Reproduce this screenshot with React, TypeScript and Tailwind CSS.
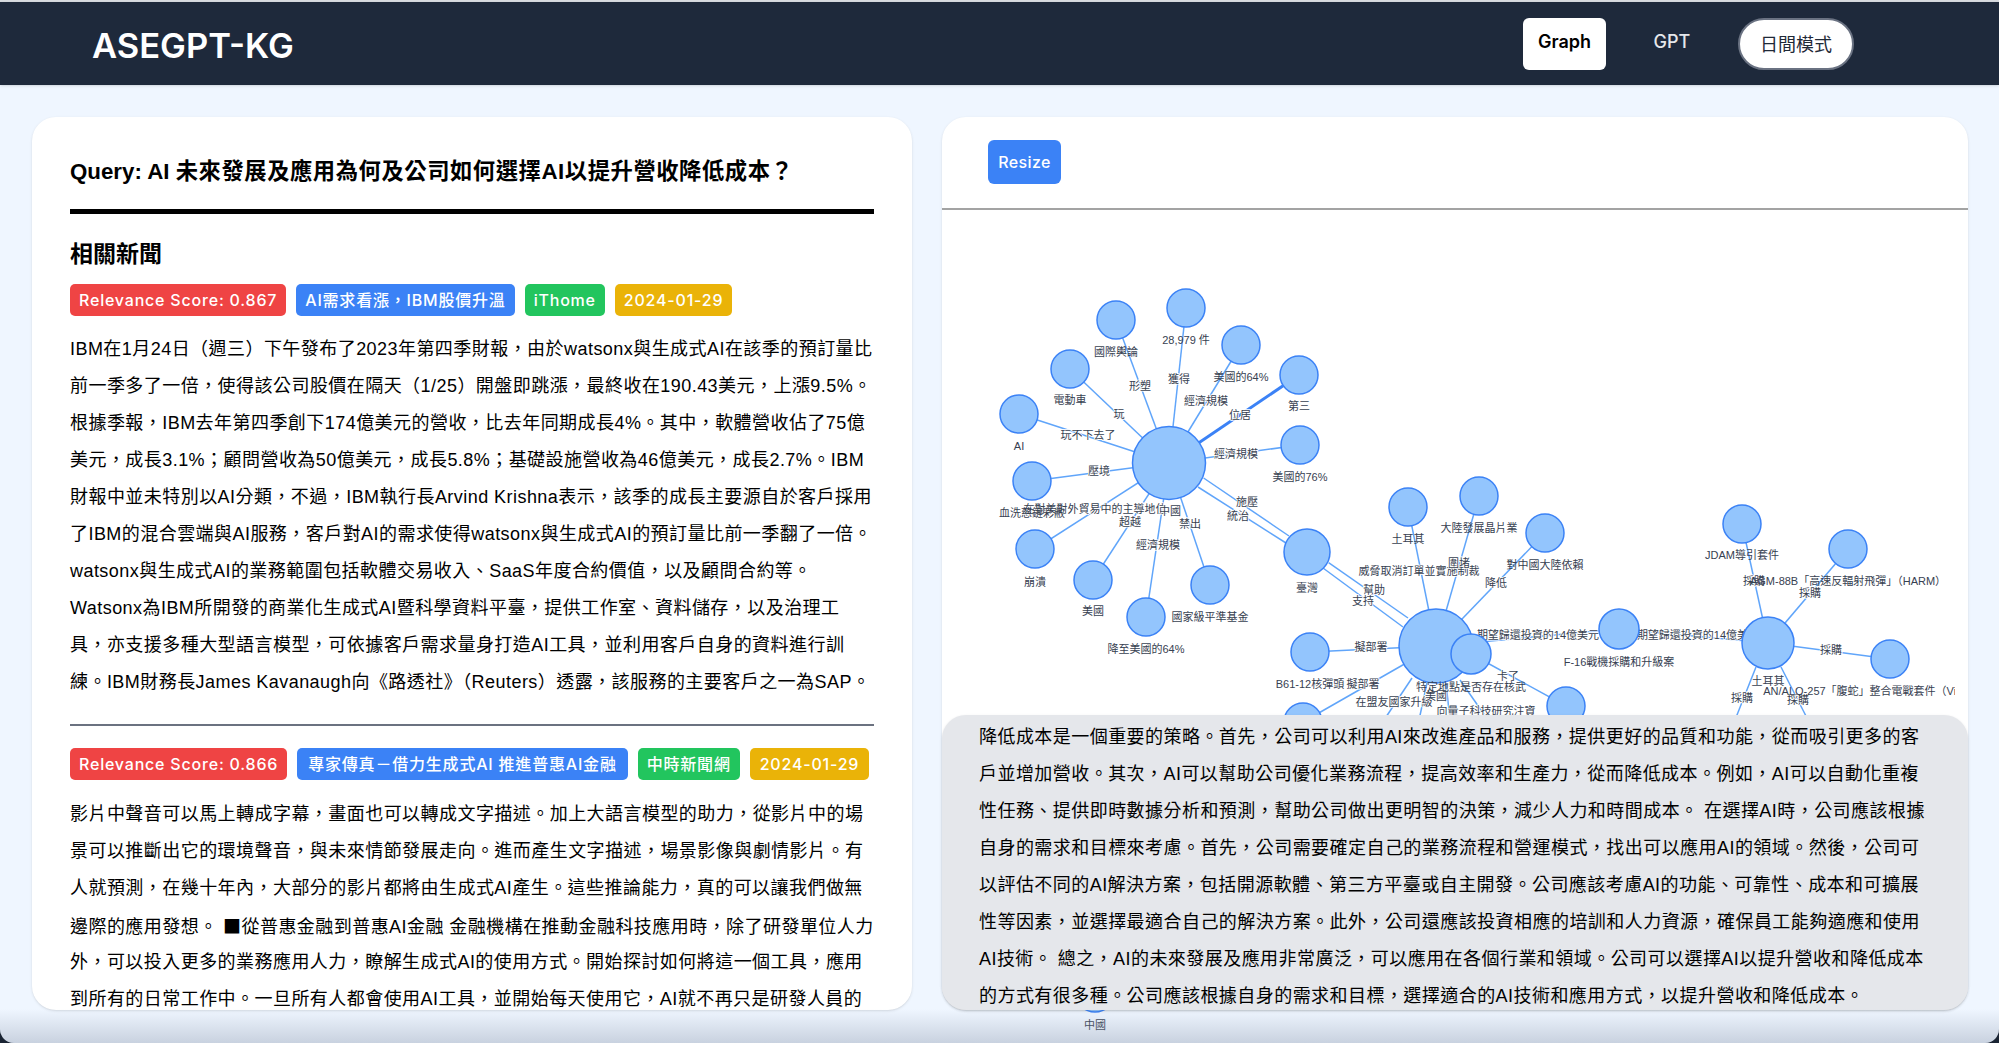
import React from "react";

const news1 = [
  "IBM在1月24日（週三）下午發布了2023年第四季財報，由於watsonx與生成式AI在該季的預訂量比",
  "前一季多了一倍，使得該公司股價在隔天（1/25）開盤即跳漲，最終收在190.43美元，上漲9.5%。",
  "根據季報，IBM去年第四季創下174億美元的營收，比去年同期成長4%。其中，軟體營收佔了75億",
  "美元，成長3.1%；顧問營收為50億美元，成長5.8%；基礎設施營收為46億美元，成長2.7%。IBM",
  "財報中並未特別以AI分類，不過，IBM執行長Arvind Krishna表示，該季的成長主要源自於客戶採用",
  "了IBM的混合雲端與AI服務，客戶對AI的需求使得watsonx與生成式AI的預訂量比前一季翻了一倍。",
  "watsonx與生成式AI的業務範圍包括軟體交易收入、SaaS年度合約價值，以及顧問合約等。",
  "Watsonx為IBM所開發的商業化生成式AI暨科學資料平臺，提供工作室、資料儲存，以及治理工",
  "具，亦支援多種大型語言模型，可依據客戶需求量身打造AI工具，並利用客戶自身的資料進行訓",
  "練。IBM財務長James Kavanaugh向《路透社》（Reuters）透露，該服務的主要客戶之一為SAP。",
];
const news2 = [
  "影片中聲音可以馬上轉成字幕，畫面也可以轉成文字描述。加上大語言模型的助力，從影片中的場",
  "景可以推斷出它的環境聲音，與未來情節發展走向。進而產生文字描述，場景影像與劇情影片。有",
  "人就預測，在幾十年內，大部分的影片都將由生成式AI產生。這些推論能力，真的可以讓我們做無",
  "邊際的應用發想。 ■從普惠金融到普惠AI金融 金融機構在推動金融科技應用時，除了研發單位人力",
  "外，可以投入更多的業務應用人力，瞭解生成式AI的使用方式。開始探討如何將這一個工具，應用",
  "到所有的日常工作中。一旦所有人都會使用AI工具，並開始每天使用它，AI就不再只是研發人員的",
];
const gpt = [
  "降低成本是一個重要的策略。首先，公司可以利用AI來改進產品和服務，提供更好的品質和功能，從而吸引更多的客",
  "戶並增加營收。其次，AI可以幫助公司優化業務流程，提高效率和生產力，從而降低成本。例如，AI可以自動化重複",
  "性任務、提供即時數據分析和預測，幫助公司做出更明智的決策，減少人力和時間成本。 在選擇AI時，公司應該根據",
  "自身的需求和目標來考慮。首先，公司需要確定自己的業務流程和營運模式，找出可以應用AI的領域。然後，公司可",
  "以評估不同的AI解決方案，包括開源軟體、第三方平臺或自主開發。公司應該考慮AI的功能、可靠性、成本和可擴展",
  "性等因素，並選擇最適合自己的解決方案。此外，公司還應該投資相應的培訓和人力資源，確保員工能夠適應和使用",
  "AI技術。 總之，AI的未來發展及應用非常廣泛，可以應用在各個行業和領域。公司可以選擇AI以提升營收和降低成本",
  "的方式有很多種。公司應該根據自身的需求和目標，選擇適合的AI技術和應用方式，以提升營收和降低成本。",
];

type N = [number, number, number, string?, number?];
const nodes: N[] = [
  [1169, 463, 36.5],
  [1186, 308, 19, "28,979 件", 340],
  [1116, 320, 19, "國際輿論", 352],
  [1241, 345, 19, "美國的64%", 377],
  [1070, 369, 19, "電動車", 400],
  [1299, 375, 19, "第三", 406],
  [1019, 414, 19, "AI", 446],
  [1300, 445, 19, "美國的76%", 477],
  [1032, 481, 19, "血洗慈鏈彩敝", 513],
  [1035, 549, 19, "崩潰", 582],
  [1093, 580, 19, "美國", 611],
  [1146, 617, 19, "降至美國的64%", 649],
  [1210, 585, 19, "國家級平準基金", 617],
  [1307, 552, 23, "臺灣", 588],
  [1436, 646, 37],
  [1471, 654, 20, "特定地點是否存在核武", 687],
  [1310, 652, 19, "B61-12核彈頭", 684],
  [1303, 722, 19],
  [1408, 507, 19, "土耳其", 539],
  [1479, 496, 19, "大陸發展晶片業", 528],
  [1545, 533, 19, "對中國大陸依賴", 565],
  [1619, 629, 20, "F-16戰機採購和升級案", 662],
  [1768, 643, 26, "土耳其", 681],
  [1742, 524, 19, "JDAM導引套件", 555],
  [1848, 549, 19, "AGM-88B「高速反輻射飛彈」（HARM）", 581],
  [1890, 659, 19, "AN/ALQ-257「腹蛇」整合電戰套件（Viper Shield）", 691],
  [1566, 706, 19],
  [1095, 993, 19, "中國", 1025],
];

type E = [number, number, number, number, number?, string?];
const H1: [number, number] = [1169, 463];
const H2: [number, number] = [1436, 646];
const H3: [number, number] = [1768, 643];
const edges: E[] = [
  [...H1, 1186, 308], [...H1, 1116, 320], [...H1, 1241, 345], [...H1, 1070, 369],
  [...H1, 1299, 375, 3, "#3b82f6"], [...H1, 1019, 414], [...H1, 1300, 445], [...H1, 1032, 481],
  [...H1, 1035, 549], [...H1, 1093, 580], [...H1, 1146, 617], [...H1, 1210, 585],
  [1203.6, 478, 1289, 536], [1198, 487, 1286, 543],
  [1328.6, 562.7, 1408, 618], [1323, 568, 1403, 627],
  [...H2, 1408, 507], [...H2, 1479, 496], [...H2, 1545, 533], [...H2, 1310, 652], [...H2, 1303, 722],
  [...H2, 1619, 629], [...H3, 1619, 629],
  [1412, 678, 1384, 720], [1427, 683, 1419, 720], [1446, 683, 1450, 720], [1460, 680, 1488, 720],
  [1471, 654, 1566, 706],
  [...H3, 1742, 524], [...H3, 1848, 549], [...H3, 1890, 659],
  [1756, 667, 1735, 720], [1781, 667, 1808, 720],
];

const edgeLabels: [number, number, string][] = [
  [1140, 386, "形塑"], [1179, 379, "獲得"], [1206, 401, "經濟規模"], [1240, 415, "位居"],
  [1119, 414, "玩"], [1088, 435, "玩不下去了"], [1236, 454, "經濟規模"], [1099, 471, "壓境"],
  [1095, 509, "在對美對外貿易中的主導地位"], [1170, 511, "中國"], [1130, 522, "超越"], [1190, 524, "禁出"],
  [1158, 545, "經濟規模"], [1247, 502, "施壓"], [1238, 516, "統治"],
  [1419, 571, "威脅取消訂單並實施制裁"], [1459, 563, "圍堵"], [1374, 590, "幫助"], [1363, 601, "支持"],
  [1496, 583, "降低"], [1371, 647, "擬部署"], [1363, 684, "擬部署"], [1394, 702, "在盟友國家升級"],
  [1508, 676, "卡了"], [1436, 696, "美國"], [1486, 711, "向量子科技研究注資"],
  [1538, 635, "期望歸還投資的14億美元"], [1698, 635, "期望歸還投資的14億美元"],
  [1754, 581, "採購"], [1810, 593, "採購"], [1831, 650, "採購"], [1742, 698, "採購"], [1798, 700, "採購"],
];

function Graph() {
  return (
    <svg
      className="absolute left-0 top-[93px] w-[1013px] h-[833px]"
      viewBox="942 210 1013 833"
      aria-label="knowledge graph"
    >
      {edges.map((e, i) => (
        <line key={i} x1={e[0]} y1={e[1]} x2={e[2]} y2={e[3]} stroke={e[5] ?? "#60a5fa"} strokeWidth={e[4] ?? 1.5} />
      ))}
      {edgeLabels.map(([x, y, t], i) => (
        <text
          key={i}
          x={x}
          y={y}
          textAnchor="middle"
          dominantBaseline="central"
          fontSize={11}
          fill="#374151"
          stroke="#ffffff"
          strokeWidth={1.5}
          paintOrder="stroke"
        >
          {t}
        </text>
      ))}
      {nodes.map((n, i) => (
        <circle key={i} cx={n[0]} cy={n[1]} r={n[2]} fill="#93c5fd" stroke="#3b82f6" strokeWidth={1.5} />
      ))}
      {nodes.map((n, i) =>
        n[3] ? (
          <text key={i} x={n[0]} y={n[4]} textAnchor="middle" dominantBaseline="central" fontSize={11} fill="#374151">
            {n[3]}
          </text>
        ) : null
      )}
    </svg>
  );
}

function Badge({ c, children }: { c: string; children: React.ReactNode }) {
  return (
    <span
      className={`h-8 rounded-[5px] flex items-center text-white text-base font-medium tracking-[0.8px] whitespace-nowrap font-['Inter','Noto_Sans_CJK_TC',sans-serif] ${c}`}
    >
      {children}
    </span>
  );
}

function Lines({ lines }: { lines: string[] }) {
  return (
    <div className="text-lg leading-[37px] tracking-wide text-black whitespace-nowrap">
      {lines.map((l, i) => {
        const parts = l.split("■");
        return (
          <div key={i} className="h-[37px]">
            {parts.length === 2 ? (
              <>
                {parts[0]}
                <span className="font-['Noto_Sans_CJK_TC',sans-serif]">■</span>
                {parts[1]}
              </>
            ) : (
              l
            )}
          </div>
        );
      })}
    </div>
  );
}

export default function App() {
  return (
    <div className="h-[1043px] w-full bg-[#1a2433] overflow-hidden font-['Liberation_Sans','Noto_Sans_CJK_TC',sans-serif]">
      <div className="relative h-full bg-[#eff6ff] rounded-b-[14px] overflow-hidden flex flex-col">
        <div className="h-[2px] bg-[#d8dbe0]" />
        <header className="h-[83px] bg-[#1e293b] flex items-center pl-[92px] pr-[145px] shadow-sm font-['Inter','Noto_Sans_CJK_TC',sans-serif]">
          <h1 className="text-[34.5px] font-semibold text-white tracking-normal pt-[5px]">ASEGPT-KG</h1>
          <div className="ml-auto flex items-center">
            <button className="w-[83px] h-[52px] bg-white rounded-md text-black font-semibold text-lg pb-[4px]">Graph</button>
            <button className="w-[132px] h-[52px] text-gray-200 font-medium text-lg pb-[4px]">GPT</button>
            <button className="w-[116px] h-[52px] bg-white rounded-full border-2 border-gray-500 text-lg text-[#1f2937] pt-[3px]">
              日間模式
            </button>
          </div>
        </header>

        <main className="flex gap-[30px] pl-[32px] pr-[31px] pt-[32px]">
          <section className="w-[880px] h-[893px] bg-white rounded-3xl shadow-sm overflow-hidden px-[38px] shrink-0">
            <h2 className="text-[22.3px] font-bold tracking-wide mt-[39px] leading-8 text-black">
              <span className="tracking-normal">Query: AI </span>未來發展及應用為何及公司如何選擇AI以提升營收降低成本？
            </h2>
            <div className="h-[5px] bg-black mt-[21px]" />
            <h3 className="text-[23px] font-bold leading-8 mt-[24px] text-black">相關新聞</h3>
            <div className="flex gap-[10px] mt-[14px]">
              <Badge c="px-[9px] bg-[#ef4444]">Relevance Score: 0.867</Badge>
              <Badge c="px-[9px] bg-[#3b82f6]">AI需求看漲，IBM股價升溫</Badge>
              <Badge c="px-[9px] bg-[#22c55e]">iThome</Badge>
              <Badge c="px-[9px] bg-[#eab308]">2024-01-29</Badge>
            </div>
            <div className="mt-[15px]">
              <Lines lines={news1} />
            </div>
            <div className="h-[2px] bg-[#6b7280] mt-[23px]" />
            <div className="flex gap-[10px] mt-[22px]">
              <Badge c="px-[9px] bg-[#ef4444]">Relevance Score: 0.866</Badge>
              <Badge c="px-[11px] bg-[#3b82f6]">專家傳真－借力生成式AI 推進普惠AI金融</Badge>
              <Badge c="px-[9px] bg-[#22c55e]">中時新聞網</Badge>
              <Badge c="px-[10px] bg-[#eab308]">2024-01-29</Badge>
            </div>
            <div className="mt-[16px]">
              <Lines lines={news2} />
            </div>
          </section>

          <section className="relative flex-1 h-[893px]">
            <div className="h-full bg-white rounded-3xl shadow-sm">
              <div className="h-[93px] border-b-2 border-[#a3a3a3] pl-[46px] pt-[23px]">
                <button className="w-[73px] h-[44px] bg-[#3b82f6] rounded-md text-white font-medium text-base tracking-wide font-['Inter',sans-serif]">
                  Resize
                </button>
              </div>
            </div>
            <Graph />
            <div className="absolute left-0 right-0 bottom-0 h-[295px] bg-[#e5e7eb] rounded-3xl shadow-sm pl-[37px] pt-[4px] overflow-hidden">
              <Lines lines={gpt} />
            </div>
          </section>
        </main>

        <div className="absolute inset-x-0 bottom-0 h-[34px] bg-gradient-to-b from-transparent to-[#8f9bb066] pointer-events-none" />
      </div>
    </div>
  );
}
